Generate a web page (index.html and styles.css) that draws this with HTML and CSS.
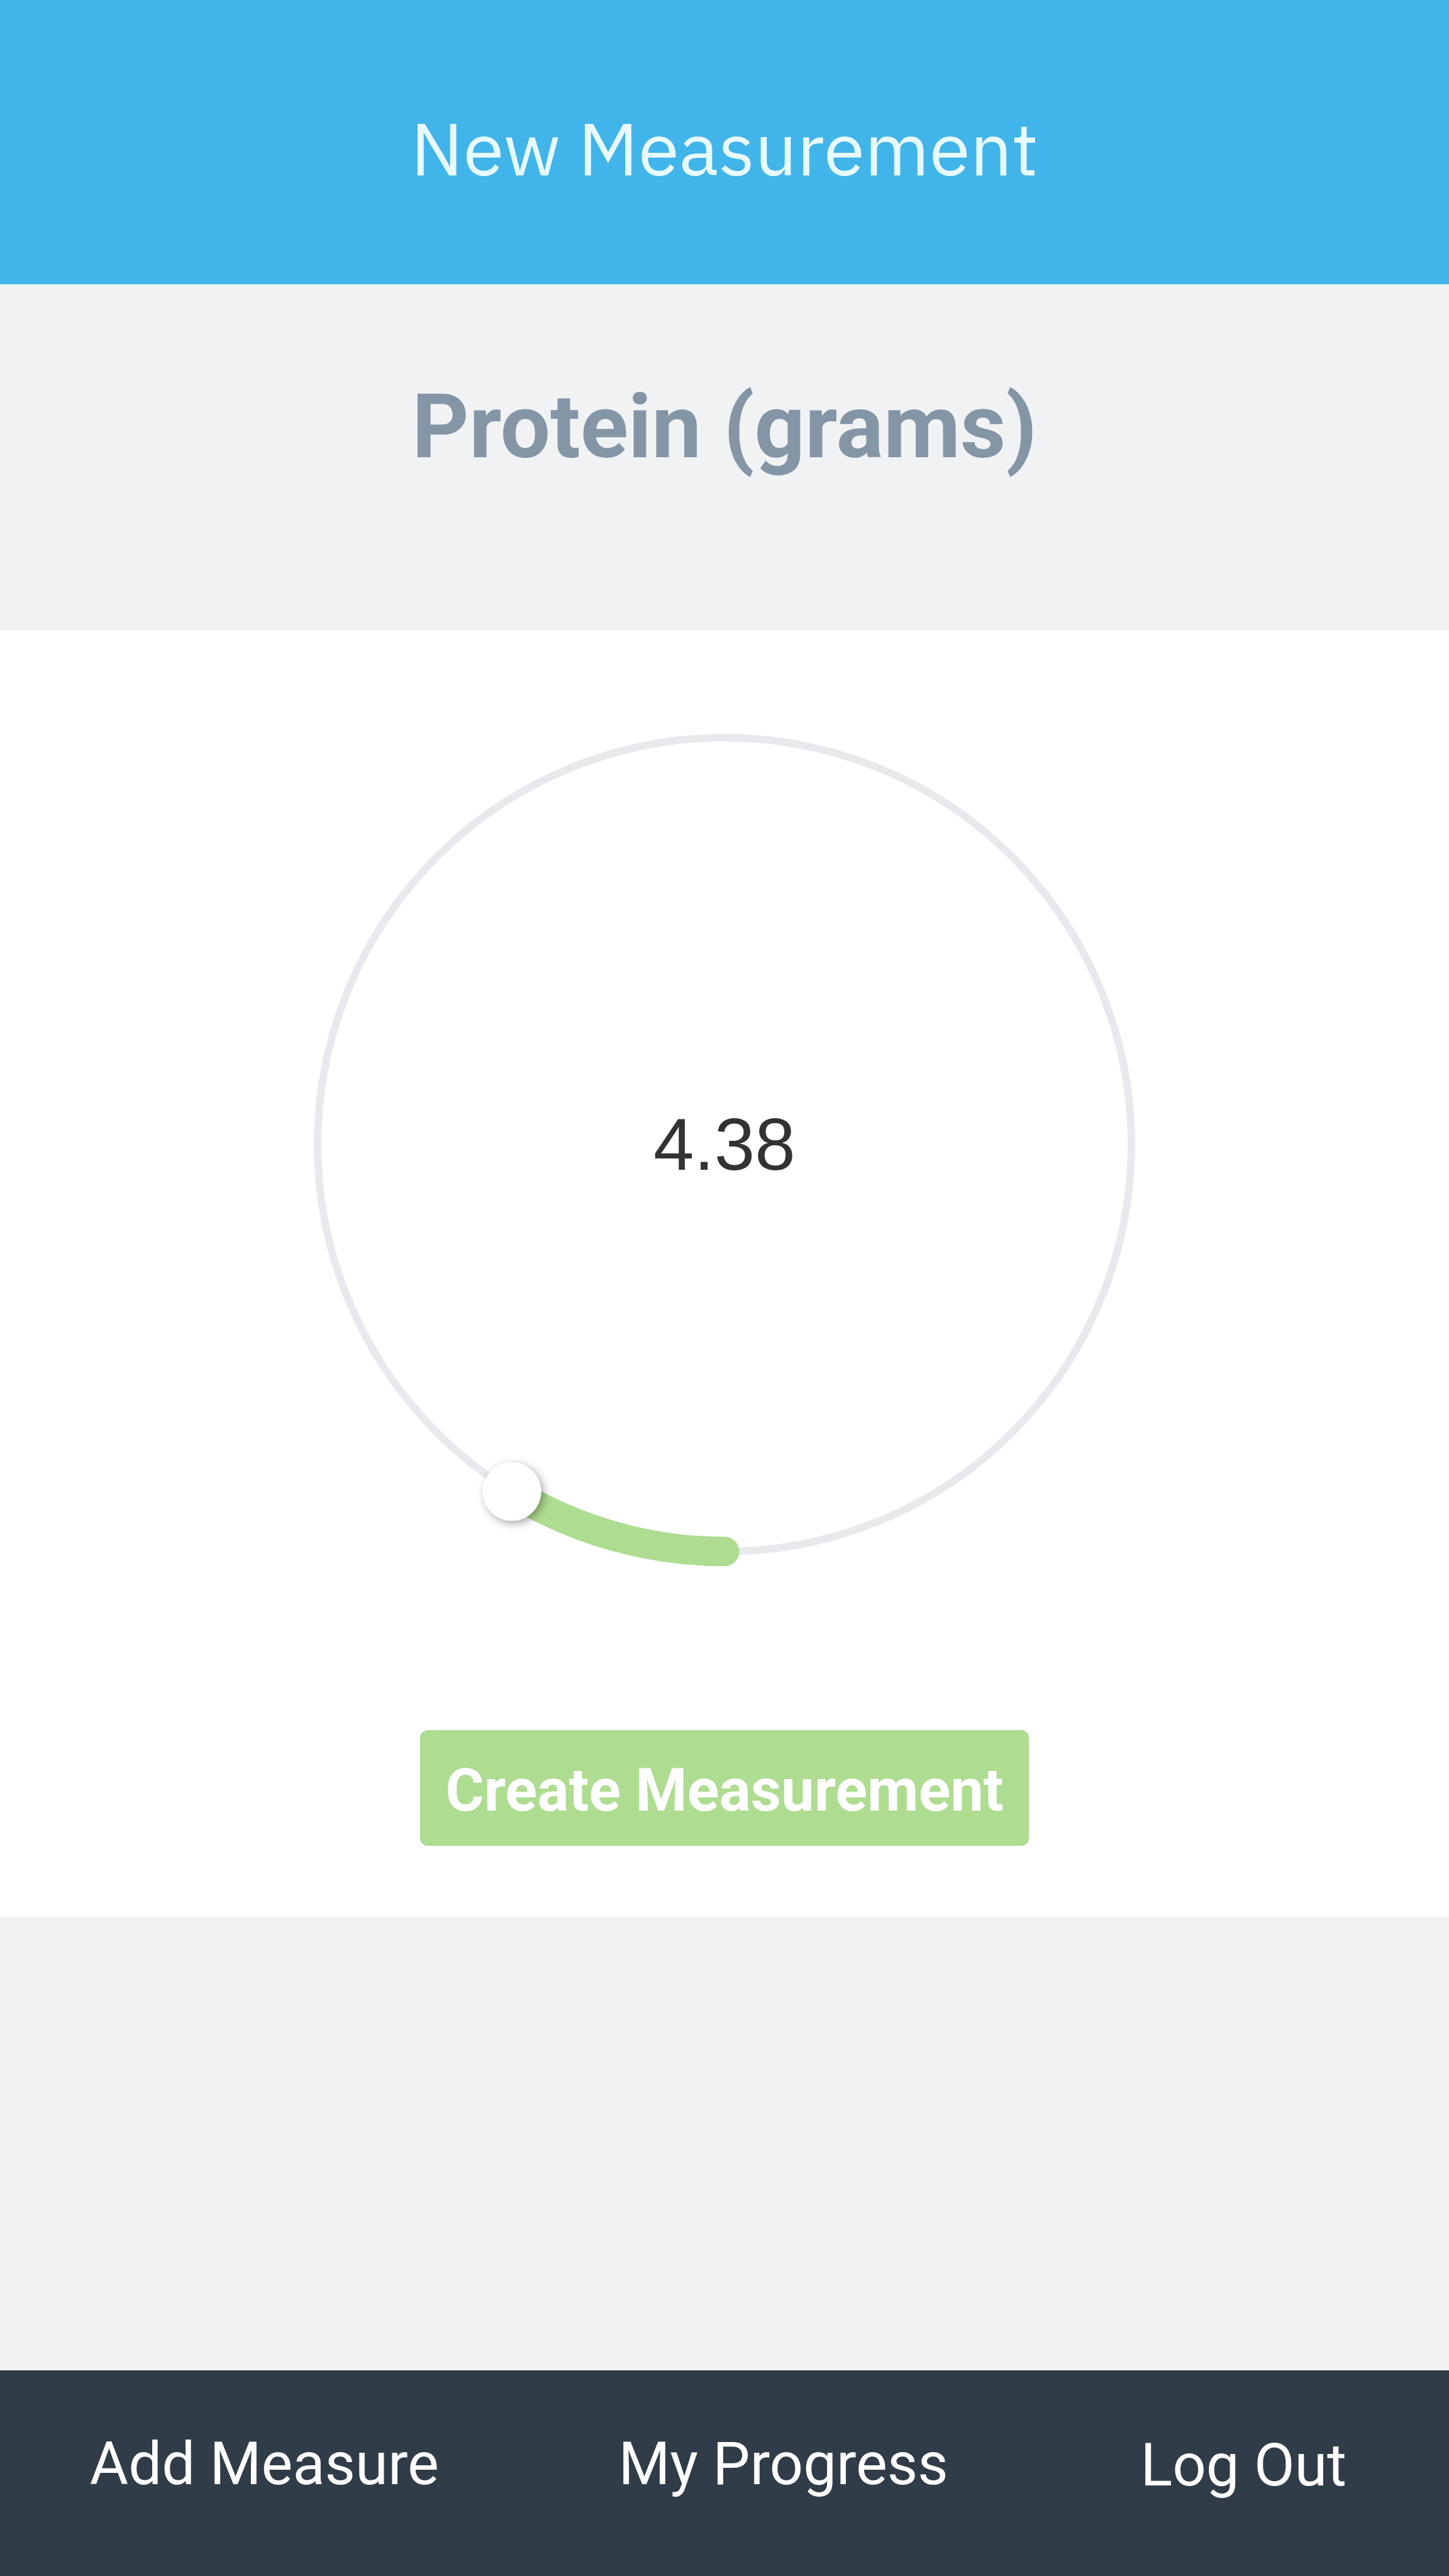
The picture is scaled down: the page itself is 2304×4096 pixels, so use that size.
FILE: index.html
```html
<!DOCTYPE html>
<html lang="en">
<head>
  <meta charset="utf-8">
  <meta name="viewport" content="width=device-width, initial-scale=1">
  <title>New Measurement</title>
  <link rel="stylesheet" href="styles.css">
</head>
<body>
  <header class="app-header">
    <h1 class="app-title">New Measurement</h1>
  </header>

  <main class="content">
    <h2 class="measure-name" id="measure-name">Protein (grams)</h2>

    <form class="measure-form">
      <div class="dial">
        <svg class="dial-face" viewBox="0 0 1400 1400" aria-hidden="true">
          <defs>
            <filter id="knob-shadow" x="-50%" y="-50%" width="200%" height="200%">
              <feDropShadow dx="4" dy="4" stdDeviation="7" flood-color="#000" flood-opacity="0.36"/>
            </filter>
          </defs>
          <circle class="dial-track" cx="700" cy="700" r="647"/>
          <path class="dial-progress" d="M700 1347A647 647 0 0 1 361.9 1251.6"/>
          <circle class="dial-knob" cx="361.9" cy="1251.6" r="46.5" filter="url(#knob-shadow)"/>
        </svg>
        <input class="dial-input" id="amount" type="range" min="0" max="50" step="0.01" value="4.38" aria-labelledby="measure-name">
        <output class="dial-value" for="amount">4.38</output>
      </div>
      <button class="create-button" type="submit">Create Measurement</button>
    </form>
  </main>

  <nav class="app-nav">
    <a class="nav-item" href="#add">Add Measure</a>
    <a class="nav-item" href="#progress">My Progress</a>
    <button class="nav-item nav-button" type="button">Log Out</button>
  </nav>
</body>
</html>
```

FILE: styles.css
```css
* {
  box-sizing: border-box;
}

body {
  display: flex;
  flex-direction: column;
  min-height: 100vh;
  margin: 0;
  background: #f0f2f4;
  font-family: Roboto, "Liberation Sans", sans-serif;
}

.app-header {
  padding: 153px 40px 135px;
  background: #41b4e9;
  text-align: center;
}

.app-title {
  margin: 0;
  color: #e7fbff;
  font-family: "IBM Plex Sans", "Noto Sans", sans-serif;
  font-size: 118px;
  font-weight: 400;
  line-height: 164px;
}

.content {
  flex: 1;
}

.measure-name {
  margin: 0;
  padding: 143px 40px 240px;
  color: #8495a6;
  font-size: 141px;
  font-weight: 700;
  line-height: 168px;
  text-align: center;
}

.measure-form {
  display: flex;
  flex-direction: column;
  align-items: center;
  gap: 231px;
  padding: 117px 40px 113px;
  background: #fff;
}

.dial {
  display: grid;
  place-items: center;
  width: 100%;
  max-width: 1400px;
}

.dial-face,
.dial-input,
.dial-value {
  grid-area: 1 / 1;
}

.dial-face {
  display: block;
  width: 100%;
}

.dial-track {
  fill: none;
  stroke: #e8e9ed;
  stroke-width: 12;
}

.dial-progress {
  fill: none;
  stroke: #aedc90;
  stroke-width: 47;
  stroke-linecap: round;
}

.dial-knob {
  fill: #fff;
}

.dial-input {
  width: 100%;
  height: 100%;
  margin: 0;
  opacity: 0;
  cursor: pointer;
}

.dial-value {
  color: #333;
  font-family: "Liberation Sans", Arial, sans-serif;
  font-size: 116px;
  line-height: 132px;
  pointer-events: none;
}

.create-button {
  padding: 28px 40px 20px;
  border: 0;
  border-radius: 12px;
  background: #aedc90;
  color: #fff;
  font-family: inherit;
  font-size: 94px;
  font-weight: 700;
  line-height: 136px;
  cursor: pointer;
}

.app-nav {
  display: flex;
  align-items: flex-start;
  justify-content: space-around;
  padding: 81px 0 108px;
  background: #303c48;
}

.nav-item {
  color: #fff;
  font-size: 94px;
  line-height: 136px;
  text-decoration: none;
}

.nav-button {
  padding: 2px 20px 0;
  border: 0;
  background: none;
  font-family: inherit;
  cursor: pointer;
}
```
